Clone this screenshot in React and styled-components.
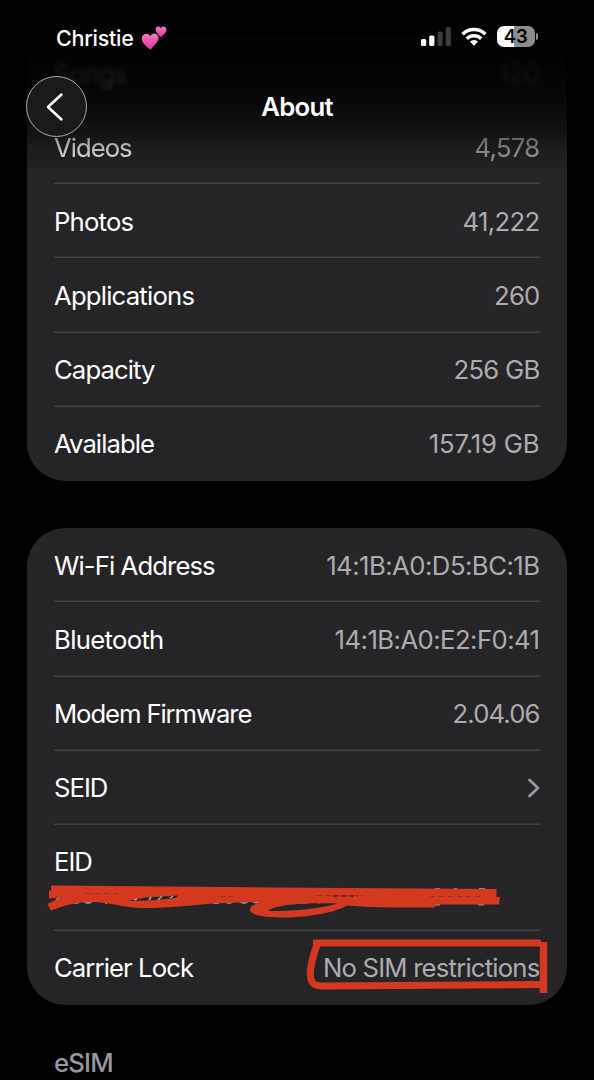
import React from "react";
import styled, { createGlobalStyle } from "styled-components";

const GlobalStyle = createGlobalStyle`
  * {
    box-sizing: border-box;
  }

  body {
    margin: 0;
    background: #000;
  }
`;

const Screen = styled.div`
  position: relative;
  width: 594px;
  height: 1080px;
  overflow: hidden;
  background: #000;
  color: #fff;
  font-family: Inter, "Liberation Sans", sans-serif;
  font-size: 25.7px;
  line-height: 32px;
`;

const Content = styled.main`
  display: flex;
  flex-direction: column;
  gap: 47.5px;
  padding: 36px 27px 0;
`;

const Card = styled.section`
  padding: 0 27.5px 0 27px;
  border-radius: 38px;
  background: #252527;
`;

const Row = styled.div`
  display: flex;
  align-items: ${(props) => (props.$tall ? "flex-start" : "center")};
  justify-content: space-between;
  height: ${(props) => (props.$tall ? "105.8px" : "74.15px")};
  padding-top: ${(props) => (props.$tall ? "21.3px" : "1px")};
  filter: ${(props) => (props.$blur ? `blur(${props.$blur}px)` : "none")};

  &:not(:last-child) {
    box-shadow: ${(props) => (props.$plain ? "none" : "inset 0 -1.5px 0 #434346")};
  }
`;

const Label = styled.span`
  letter-spacing: ${(props) => props.$track || 0}px;
  white-space: nowrap;
`;

const Value = styled(Label)`
  color: #acacaf;
`;

const SectionTitle = styled.h2`
  margin: -5px 0 0 27px;
  color: #98989f;
  font-size: 25.7px;
  font-weight: 500;
  letter-spacing: -0.8px;
`;

const TopBar = styled.header`
  position: absolute;
  inset: 0 0 auto;
  height: 184px;
  background: linear-gradient(
    rgba(0, 0, 0, 1) 0,
    rgba(0, 0, 0, 0.96) 36px,
    rgba(0, 0, 0, 0.89) 78px,
    rgba(0, 0, 0, 0.8) 100px,
    rgba(0, 0, 0, 0.55) 128px,
    rgba(0, 0, 0, 0.22) 152px,
    rgba(0, 0, 0, 0) 180px
  );
`;

const StatusBar = styled.div`
  display: flex;
  align-items: center;
  justify-content: space-between;
  height: 76px;
  padding: 0 56px;
`;

const Carrier = styled.div`
  display: flex;
  align-items: center;
  gap: 7px;
  font-size: 21.5px;
  font-weight: 500;
  letter-spacing: -0.25px;
`;

const StatusIcons = styled.div`
  display: flex;
  align-items: center;
  gap: 10px;
  margin-top: -3px;
`;

const Battery = styled.div`
  display: flex;
  align-items: center;
  gap: 1px;
`;

const BatteryBody = styled.div`
  width: 38.5px;
  height: 21px;
  border-radius: 7px;
  background: linear-gradient(90deg, #fff 44%, #8b8b8b 44%);
  color: #000;
  font-size: 18.5px;
  font-weight: 600;
  line-height: 21px;
  text-align: center;
`;

const BatteryTip = styled.div`
  width: 2px;
  height: 7px;
  border-radius: 0 2px 2px 0;
  background: #8b8b8b;
`;

const NavBar = styled.div`
  display: grid;
  grid-template-columns: 61px 1fr 61px;
  align-items: center;
  height: 61px;
  padding: 0 26px;
`;

const BackButton = styled.button`
  display: flex;
  align-items: center;
  justify-content: center;
  width: 61px;
  height: 61px;
  padding: 0 3px 0 0;
  border: 1px solid #aaa;
  border-radius: 50%;
  background: #1a1a1a;
`;

const Title = styled.h1`
  margin: 0;
  font-size: 25.7px;
  font-weight: 600;
  letter-spacing: -0.7px;
  text-align: center;
`;

const Markup = styled.svg`
  position: absolute;
  top: 0;
  left: 0;
  pointer-events: none;
`;

const storage = [
  { label: "Songs", labelTrack: -0.8, value: "120", valueTrack: -0.7, blur: 2, plain: true },
  { label: "Videos", labelTrack: -1, value: "4,578", valueTrack: -0.7, blur: 0.5 },
  { label: "Photos", labelTrack: -0.8, value: "41,222", valueTrack: -0.65 },
  { label: "Applications", labelTrack: -0.8, value: "260", valueTrack: -0.8 },
  { label: "Capacity", labelTrack: -0.9, value: "256 GB", valueTrack: -0.75 },
  { label: "Available", labelTrack: -0.95, value: "157.19 GB", valueTrack: -0.15 },
];

const network = [
  { label: "Wi-Fi Address", labelTrack: -0.9, value: "14:1B:A0:D5:BC:1B", valueTrack: -0.52 },
  { label: "Bluetooth", labelTrack: -0.68, value: "14:1B:A0:E2:F0:41", valueTrack: -0.55 },
  { label: "Modem Firmware", labelTrack: -1.1, value: "2.04.06", valueTrack: -0.9 },
  { label: "SEID", labelTrack: -1, chevron: true },
  { label: "EID", labelTrack: -1, tall: true },
  { label: "Carrier Lock", labelTrack: -0.92, value: "No SIM restrictions", valueTrack: -0.8 },
];

function Hearts() {
  return (
    <svg width="26" height="26" viewBox="0 0 26 26">
      <defs>
        <linearGradient id="heart" x1="0" y1="0" x2="0" y2="1">
          <stop offset="0" stopColor="#f779c0" />
          <stop offset="1" stopColor="#dd2f9a" />
        </linearGradient>
      </defs>
      <path
        fill="url(#heart)"
        d="M9.500 25C6 21.500 .8 18.500 .8 13.500C.8 8.500 7 7 9.200 11.200C11 6.800 17.600 7.800 17.600 12.800C17.600 17.500 12 21 9.500 25Z"
      />
      <path
        fill="url(#heart)"
        d="M20 12.300C18 10 14.600 7.800 14.600 4.500C14.600 1.200 18.600 .6 19.800 3.400C21.200 .4 25.600 1.400 25.400 4.900C25.200 8.200 21.600 9.800 20 12.300Z"
      />
    </svg>
  );
}

function Signal() {
  return (
    <svg width="30" height="19" viewBox="0 0 30 19">
      <rect x="0" y="12" width="5.200" height="7" rx="1.500" fill="#fff" />
      <rect x="8.200" y="8.500" width="5.200" height="10.500" rx="1.500" fill="#fff" />
      <rect x="16.500" y="4.500" width="5.200" height="14.500" rx="1.500" fill="#3c3c3c" />
      <rect x="24.700" y="0" width="5.200" height="19" rx="1.500" fill="#3c3c3c" />
    </svg>
  );
}

function Wifi() {
  return (
    <svg width="26" height="19" viewBox="0 0 27 19">
      <g fill="none" stroke="#fff" strokeWidth="3.700">
        <path d="M1.600 7.100A17 17 0 0 1 25.400 7.100" />
        <path d="M6 11.800A10.700 10.700 0 0 1 21 11.800" />
      </g>
      <path fill="#fff" d="M13.500 19L9.300 14.800A6.200 6.200 0 0 1 17.700 14.800Z" />
    </svg>
  );
}

// Red marker: the crossed-out EID number and the box round the carrier lock value
function MarkerStrokes() {
  return (
    <Markup width="594" height="1080" viewBox="0 0 594 1080">
      <g fill="none" stroke="#8f8f92" strokeWidth="1.800">
        <path d="M56 900L60 897M72 901Q76 905 80 901M84 901Q88 905 92 901M106 900V904" />
        <path d="M185 904L188 900M195 899V904M213 903H219M225 901Q229 905 233 901M240 901Q244 905 248 901M252 901Q256 904 260 901" />
        <path d="M294 904L297 901M301 901Q305 905 309 901M316 901Q319 904 322 901" />
        <path d="M435 889H440M454 889H457M479 889H485M435 904.500H440M478 904.500H484" />
      </g>
      <path
        fill="#d43920"
        fillRule="evenodd"
        d="M51 885.500L270 887.500L496.500 889V897H500L499 904.500H435V907.500H395Q370 907.500 347 905.500C338 911 312 918 280 917.500C262 917.500 250 915 250 909.500C250 906 256 903.500 262 901.500Q235 903 212 903.500C190 905.500 166 908.500 140 908C122 907 112 903 94 902C78 901.500 66 905 51 910.500L47.500 904L62 897L49 898.500V890.500H51Z
        M268 911C275 904.500 303 902.500 338 903.500C318 909 292 911.500 268 911Z"
      />
      <path fill="#252527" d="M128 901L145 897.500L178 895.500L176 898L150 900.500Z" />
      <path
        d="M134 900L137 899M149 900L151 897M158 900L162 896M170 898L173 896"
        stroke="#a7a7aa"
        strokeWidth="1.500"
      />
      <g fill="none" stroke="#963022" strokeWidth="1">
        <path d="M86 893.500H118" strokeDasharray="6 3" />
        <path d="M221 896.500H235" strokeDasharray="5 2" />
        <path d="M316 895.500H364" strokeDasharray="6 3" />
        <path d="M430 896.500H482" strokeDasharray="5 4" />
      </g>
      <path d="M333 896H358" stroke="#3b302f" strokeWidth="1.500" strokeDasharray="5 3" />
      <g fill="none" stroke="#d43920" strokeWidth="7">
        <path d="M313 943H541" />
        <path d="M317.500 943C313 956 307 975 312.500 982.500Q315 986 324 986L541 984.500" />
        <path d="M543.500 942V993" strokeWidth="7.500" />
      </g>
    </Markup>
  );
}

function ListRow({ item }) {
  return (
    <Row $tall={item.tall} $blur={item.blur} $plain={item.plain}>
      <Label $track={item.labelTrack}>{item.label}</Label>
      {item.value && <Value $track={item.valueTrack}>{item.value}</Value>}
      {item.chevron && (
        <svg width="12" height="20" viewBox="0 0 12 20">
          <path
            d="M1.500 2L10 10L1.500 18"
            fill="none"
            stroke="#98989c"
            strokeWidth="2.800"
            strokeLinecap="round"
            strokeLinejoin="round"
          />
        </svg>
      )}
    </Row>
  );
}

export default function App() {
  return (
    <>
      <GlobalStyle />
      <Screen>
        <Content>
          <Card>
            {storage.map((item) => (
              <ListRow key={item.label} item={item} />
            ))}
          </Card>
          <Card>
            {network.map((item) => (
              <ListRow key={item.label} item={item} />
            ))}
          </Card>
          <SectionTitle>eSIM</SectionTitle>
        </Content>

        <TopBar>
          <StatusBar>
            <Carrier>
              Christie <Hearts />
            </Carrier>
            <StatusIcons>
              <Signal />
              <Wifi />
              <Battery>
                <BatteryBody>43</BatteryBody>
                <BatteryTip />
              </Battery>
            </StatusIcons>
          </StatusBar>
          <NavBar>
            <BackButton aria-label="Back">
              <svg width="18" height="30" viewBox="0 0 18 30">
                <path
                  d="M15.500 2.500L2 15L15.500 27.500"
                  fill="none"
                  stroke="#fff"
                  strokeWidth="2.500"
                  strokeLinecap="round"
                  strokeLinejoin="round"
                />
              </svg>
            </BackButton>
            <Title>About</Title>
          </NavBar>
        </TopBar>

        <MarkerStrokes />
      </Screen>
    </>
  );
}
